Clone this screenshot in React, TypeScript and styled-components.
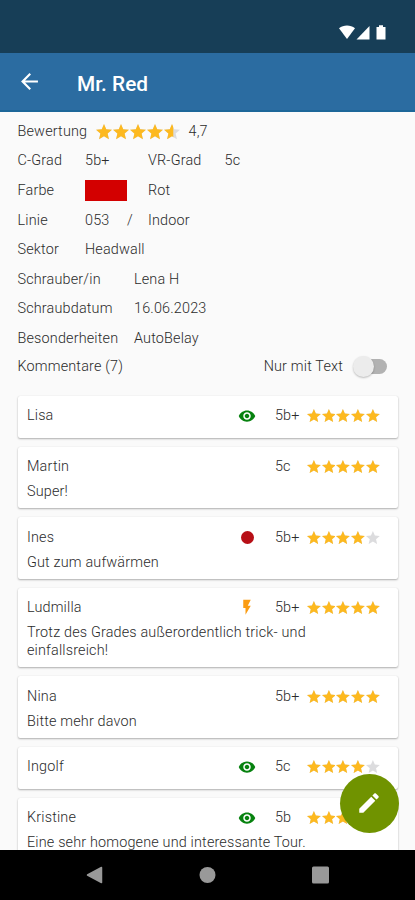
import React from "react";
import styled, { createGlobalStyle } from "styled-components";

const GlobalStyle = createGlobalStyle`
  * { box-sizing: border-box; }
  body { margin: 0; background: #fafafa; }
`;

const Screen = styled.div`
  width: 415px;
  height: 900px;
  display: flex;
  flex-direction: column;
  position: relative;
  overflow: hidden;
  background: #fafafa;
  color: #2b2b2b;
  font: 300 14.4px/18px Roboto, sans-serif;
  letter-spacing: 0.17px;
`;

const StatusBar = styled.div`
  height: 53px;
  flex: none;
  background: #173e57;
  display: flex;
  justify-content: flex-end;
  padding: 24px 28px 0 0;
`;

const AppBar = styled.header`
  height: 59px;
  flex: none;
  background: #2b6ca1;
  border-bottom: 2px solid #1d6799;
  display: flex;
  align-items: center;
  padding: 0 0 0 20px;
`;

const Title = styled.h1`
  margin: 4px 0 0 38px;
  color: #fff;
  font-size: 20.8px;
  font-weight: 500;
  line-height: 24px;
  letter-spacing: 0;
`;

const Content = styled.main`
  flex: 1;
  min-height: 0;
  overflow: hidden;
  padding: 5px 17px 0 17.5px;
`;

const InfoRow = styled.div`
  height: 29.6px;
  display: flex;
  align-items: center;
  white-space: nowrap;
`;

const Cell = styled.span<{ $w?: number }>`
  flex: none;
  width: ${(p) => (p.$w ? `${p.$w}px` : "auto")};
`;

const Swatch = styled.span`
  width: 42px;
  height: 21px;
  background: #d30000;
  margin-right: 21px;
`;

const CommentsBar = styled.div`
  height: 26px;
  display: flex;
  align-items: center;
`;

const SwitchLabel = styled.span`
  margin-left: auto;
  margin-right: 10px;
`;

const Track = styled.span`
  width: 34px;
  height: 22px;
  display: flex;
  align-items: center;
  padding-left: 6px;
  margin-right: 11px;
  &::before {
    content: "";
    flex: 1;
    height: 15px;
    border-radius: 8px;
    background: #b2b2b2;
  }
`;

const Thumb = styled.span`
  flex: none;
  width: 21px;
  height: 21px;
  margin-right: -21px;
  border-radius: 50%;
  background: #ececec;
  box-shadow: 0 1px 2px rgba(0, 0, 0, 0.25);
  z-index: 1;
`;

const List = styled.div`
  display: flex;
  flex-direction: column;
  gap: 9px;
  padding-top: 16px;
`;

const Card = styled.article`
  flex: none;
  width: 380px;
  padding: 11.3px 18px 7.6px 9.5px;
  min-height: 41.8px;
  background: #fff;
  border-radius: 2px;
  box-shadow: 0 1px 2px rgba(0, 0, 0, 0.3), 0 0 1px rgba(0, 0, 0, 0.1);
`;

const CardHead = styled.div`
  display: flex;
  align-items: center;
  height: 18px;
`;

const Name = styled.span`
  flex: 1;
`;

const Marker = styled.span`
  width: 18px;
  height: 18px;
  margin-right: 18.5px;
  display: flex;
  align-items: center;
  justify-content: center;
`;

const Grade = styled.span`
  width: 32px;
`;

const Comment = styled.p`
  margin: 7.1px 0 0;
  width: 300px;
  line-height: 17.7px;
  white-space: pre;
`;

const StarRow = styled.span<{ $gap: number }>`
  display: flex;
  gap: ${(p) => p.$gap}px;
`;

const Dot = styled.span`
  width: 13px;
  height: 13px;
  border-radius: 50%;
  background: #b70f16;
`;

const Fab = styled.button`
  position: absolute;
  left: 339.5px;
  top: 773.5px;
  width: 59px;
  height: 59px;
  padding: 0;
  border: 0;
  border-radius: 50%;
  background: #709300;
  display: flex;
  align-items: center;
  justify-content: center;
`;

const NavBar = styled.nav`
  height: 50px;
  flex: none;
  background: #000;
  display: flex;
  justify-content: space-between;
  align-items: center;
  padding: 0 86px 0 86px;
`;

const STAR =
  "M12 17.27L18.18 21l-1.64-7.03L22 9.24l-7.19-.61L12 2 9.19 8.63 2 9.24l5.46 4.73L5.82 21z";

function Stars({ value, size, gap }: { value: number; size: number; gap: number }) {
  return (
    <StarRow $gap={gap}>
      {[0, 1, 2, 3, 4].map((i) => {
        const fill = Math.max(0, Math.min(1, value - i));
        return (
          <svg key={i} width={size} height={size} viewBox="2 2 20 20">
            <path d={STAR} fill="#dcdcde" />
            {fill > 0 && (
              <path
                d={STAR}
                fill="#fdb91f"
                style={{ clipPath: fill < 1 ? "polygon(0 0, 58% 0, 58% 100%, 0 100%)" : undefined }}
              />
            )}
          </svg>
        );
      })}
    </StarRow>
  );
}

type Kind = "eye" | "dot" | "bolt";

function MarkerIcon({ kind }: { kind: Kind }) {
  if (kind === "dot") return <Dot />;
  if (kind === "bolt")
    return (
      <svg width="18" height="18" viewBox="0 1 24 24">
        <path d="M7 2v11h3v9l7-12h-4l4-8z" fill="#fb9c12" />
      </svg>
    );
  return (
    <svg width="18" height="18" viewBox="0 0 24 24">
      <path
        fill="#07820f"
        d="M12 4.5C7 4.5 2.73 7.61 1 12c1.73 4.39 6 7.5 11 7.5s9.27-3.11 11-7.5c-1.73-4.39-6-7.5-11-7.5zM12 17c-2.76 0-5-2.24-5-5s2.24-5 5-5 5 2.24 5 5-2.24 5-5 5zm0-8c-1.66 0-3 1.34-3 3s1.34 3 3 3 3-1.34 3-3-1.34-3-3-3z"
      />
    </svg>
  );
}

const comments: { name: string; kind?: Kind; grade: string; stars: number; text?: string }[] = [
  { name: "Lisa", kind: "eye", grade: "5b+", stars: 5 },
  { name: "Martin", grade: "5c", stars: 5, text: "Super!" },
  { name: "Ines", kind: "dot", grade: "5b+", stars: 4, text: "Gut zum aufwärmen" },
  {
    name: "Ludmilla",
    kind: "bolt",
    grade: "5b+",
    stars: 5,
    text: "Trotz des Grades außerordentlich trick- und\neinfallsreich!",
  },
  { name: "Nina", grade: "5b+", stars: 5, text: "Bitte mehr davon" },
  { name: "Ingolf", kind: "eye", grade: "5c", stars: 4 },
  { name: "Kristine", kind: "eye", grade: "5b", stars: 5, text: "Eine sehr homogene und interessante Tour." },
];

export default function App() {
  return (
    <Screen>
      <GlobalStyle />
      <StatusBar>
        <svg width="48" height="17" viewBox="0 0 48 17" fill="#fff">
          <path d="M0 4.2C4.5.6 11.5.6 16 4.2L8 15z" />
          <path d="M30.5 2v13.5H17.5z" />
          <path d="M37.5 3h2.5V1.3h4V3h2.5v12.5h-9z" />
        </svg>
      </StatusBar>
      <AppBar>
        <svg width="19" height="19" viewBox="3 3 18 18">
          <path d="M20 11H7.83l5.59-5.59L12 4l-8 8 8 8 1.41-1.41L7.83 13H20v-2z" fill="#fff" />
        </svg>
        <Title>Mr. Red</Title>
      </AppBar>
      <Content>
        <InfoRow>
          <Cell $w={78.5}>Bewertung</Cell>
          <Cell $w={92.5}>
            <Stars value={4.5} size={16} gap={1} />
          </Cell>
          <Cell>4,7</Cell>
        </InfoRow>
        <InfoRow>
          <Cell $w={67.5}>C-Grad</Cell>
          <Cell $w={63}>5b+</Cell>
          <Cell $w={76.5}>VR-Grad</Cell>
          <Cell>5c</Cell>
        </InfoRow>
        <InfoRow>
          <Cell $w={67.5}>Farbe</Cell>
          <Swatch />
          <Cell>Rot</Cell>
        </InfoRow>
        <InfoRow>
          <Cell $w={67.5}>Linie</Cell>
          <Cell $w={42}>053</Cell>
          <Cell $w={21}>/</Cell>
          <Cell>Indoor</Cell>
        </InfoRow>
        <InfoRow>
          <Cell $w={67.5}>Sektor</Cell>
          <Cell>Headwall</Cell>
        </InfoRow>
        <InfoRow>
          <Cell $w={116.5}>Schrauber/in</Cell>
          <Cell>Lena H</Cell>
        </InfoRow>
        <InfoRow>
          <Cell $w={116.5}>Schraubdatum</Cell>
          <Cell>16.06.2023</Cell>
        </InfoRow>
        <InfoRow>
          <Cell $w={116.5}>Besonderheiten</Cell>
          <Cell>AutoBelay</Cell>
        </InfoRow>
        <CommentsBar>
          <span>Kommentare (7)</span>
          <SwitchLabel>Nur mit Text</SwitchLabel>
          <Thumb />
          <Track />
        </CommentsBar>
        <List>
          {comments.map((c) => (
            <Card key={c.name}>
              <CardHead>
                <Name>{c.name}</Name>
                <Marker>{c.kind && <MarkerIcon kind={c.kind} />}</Marker>
                <Grade>{c.grade}</Grade>
                <Stars value={c.stars} size={13.8} gap={0.9} />
              </CardHead>
              {c.text && <Comment>{c.text}</Comment>}
            </Card>
          ))}
        </List>
      </Content>
      <NavBar>
        <svg width="17" height="18" viewBox="0 0 17 18">
          <path d="M15.5 1.5v15L1.5 9z" fill="#999" stroke="#999" strokeWidth="1.5" strokeLinejoin="round" />
        </svg>
        <svg width="17" height="18" viewBox="0 0 17 18">
          <circle cx="8.5" cy="9" r="8" fill="#999" />
        </svg>
        <svg width="17" height="18" viewBox="0 0 17 18">
          <rect y="0.5" width="17" height="17" rx="1.5" fill="#999" />
        </svg>
      </NavBar>
      <Fab aria-label="Kommentar bearbeiten">
        <svg width="26" height="26" viewBox="0 0 24 24">
          <path
            fill="#fff"
            d="M3 17.25V21h3.75L17.81 9.94l-3.75-3.75L3 17.25zM20.71 7.04c.39-.39.39-1.02 0-1.41l-2.34-2.34c-.39-.39-1.02-.39-1.41 0l-1.83 1.83 3.75 3.75 1.83-1.83z"
          />
        </svg>
      </Fab>
    </Screen>
  );
}
